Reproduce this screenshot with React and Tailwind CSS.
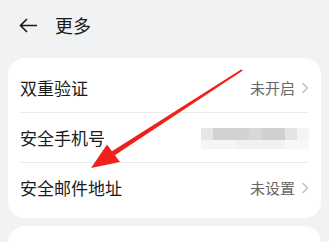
import React from 'react';

const font = { fontFamily: '"Noto Sans CJK SC", "Noto Sans", sans-serif' };

function Chevron() {
  return (
    <svg width="8" height="12" viewBox="0 0 8 12" className="ml-[6px]">
      <path d="M1.5 1 L6.5 6 L1.5 11" fill="none" stroke="#bcbcbc" strokeWidth="1.3" />
    </svg>
  );
}

function Row({ title, value, blurred, last }) {
  return (
    <div className="h-[50px] flex items-center justify-between px-3 relative">
      <span className="text-[17px] text-[#1a1a1a]">{title}</span>
      {blurred ? (
        <div className="flex flex-col">
          <div className="flex h-[12px]">
            <div className="w-[12px] bg-[#e6e6e6]" />
            <div className="w-[36px] bg-[#d2d2d2]" />
            <div className="w-[12px] bg-[#d8d8d8]" />
            <div className="w-[24px] bg-[#d0d0d0]" />
            <div className="w-[12px] bg-[#e3e3e3]" />
            <div className="w-[12px] bg-[#f4f4f4]" />
          </div>
          <div className="flex h-[9px]">
            <div className="w-[36px] bg-[#f5f5f5]" />
            <div className="w-[48px] bg-[#f1f1f1]" />
            <div className="w-[24px] bg-[#f7f7f7]" />
          </div>
        </div>
      ) : (
        <div className="flex items-center text-[#666666]">
          <span className="text-[15px]">{value}</span>
          <Chevron />
        </div>
      )}
      {!last && <div className="absolute left-3 right-3 bottom-0 h-px bg-[#ececec]" />}
    </div>
  );
}

export default function App() {
  return (
    <div className="w-[329px] h-[242px] bg-[#f1f2f4] overflow-hidden relative" style={font}>
      <div className="h-[50px] flex items-center pl-[19px] gap-[17px]">
        <svg width="19" height="15" viewBox="0 0 19 15">
          <path d="M18 7.5 H1.5 M8 1 L1.5 7.5 L8 14" fill="none" stroke="#1a1a1a" strokeWidth="1.6" />
        </svg>
        <span className="text-[18px] text-[#1a1a1a]">更多</span>
      </div>
      <div className="mx-2 mt-[8px] bg-white rounded-[16px] py-[5px]">
        <Row title="双重验证" value="未开启" />
        <Row title="安全手机号" blurred />
        <Row title="安全邮件地址" value="未设置" last />
      </div>
      <div className="mx-2 mt-[8px] bg-white rounded-[16px] h-[40px]" />
      <svg className="absolute left-0 top-0" width="329" height="242" viewBox="0 0 329 242">
        <polygon points="241.5,69.2 242.5,70.8 114.4,155.6 111.6,151.4" fill="#f0201c" />
        <polygon points="91,168 107,144.5 120,162" fill="#f0201c" />
      </svg>
    </div>
  );
}
